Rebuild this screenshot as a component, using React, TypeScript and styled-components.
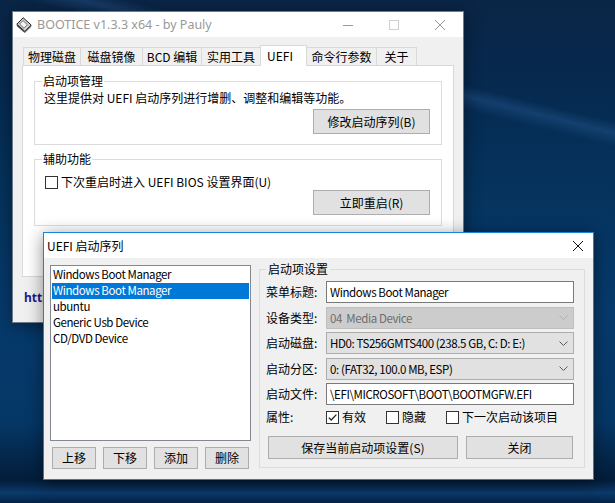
import React from "react";
import styled, { createGlobalStyle } from "styled-components";

const CJK = `"Noto Sans CJK SC", sans-serif`;
const LATIN = `"Noto Sans", "Noto Sans CJK SC", sans-serif`;

const GlobalStyle = createGlobalStyle`
  *, *::before, *::after { box-sizing: border-box; }
  html, body { margin: 0; padding: 0; background: #052a52; }
  body {
    font-family: ${CJK};
    font-size: 12px;
    line-height: 16px;
    color: #000;
  }
`;

const Desktop = styled.main`
  position: relative;
  width: 615px;
  height: 503px;
  overflow: hidden;
  background:
    linear-gradient(194deg, transparent 18.6%, rgba(60, 120, 190, 0.25) 20.3%, transparent 22.4%),
    linear-gradient(180deg, #0a2546 0%, #062a50 18%, #05345f 40%, #063a6c 62%, #053766 84%, #031d3a 95.5%, #0b3a6b 98%, #042242 100%);
`;

const Window = styled.section<{ $x: number; $y: number; $w: number; $h: number; $active?: boolean }>`
  position: absolute;
  left: ${(p) => p.$x}px;
  top: ${(p) => p.$y}px;
  width: ${(p) => p.$w}px;
  height: ${(p) => p.$h}px;
  display: flex;
  flex-direction: column;
  background: #f0f0f0;
  border: 1px solid ${(p) => (p.$active ? "#1883d7" : "#6b7b8c")};
  box-shadow: 0 3px 16px rgba(0, 0, 0, 0.45);
`;

const TitleBar = styled.header<{ $active?: boolean }>`
  flex: none;
  height: 25px;
  display: flex;
  align-items: center;
  background: #fff;
  color: ${(p) => (p.$active ? "#000" : "#999")};
`;

const AppIcon = styled.svg`
  flex: none;
  margin: 0 5px 0 3px;
`;

const TitleText = styled.span<{ $latin?: boolean }>`
  flex: 1;
  padding-left: ${(p) => (p.$latin ? 0 : 3)}px;
  font-family: ${(p) => (p.$latin ? LATIN : CJK)};
  font-size: ${(p) => (p.$latin ? 12.5 : 12)}px;
  white-space: nowrap;
`;

const CaptionButton = styled.div<{ $w?: number }>`
  flex: none;
  width: ${(p) => p.$w ?? 46}px;
  height: 100%;
  display: flex;
  align-items: center;
  justify-content: center;
`;

const MainBody = styled.div`
  flex: 1;
  display: flex;
  flex-direction: column;
  padding: 8px 9px 0;
`;

const TabStrip = styled.div`
  position: relative;
  z-index: 1;
  display: flex;
  align-items: flex-end;
  height: 20px;
  padding-left: 1px;
`;

const Tab = styled.div<{ $w: number; $selected?: boolean }>`
  position: relative;
  z-index: ${(p) => (p.$selected ? 1 : 0)};
  flex: none;
  width: ${(p) => p.$w}px;
  height: ${(p) => (p.$selected ? 21 : 18)}px;
  margin-bottom: ${(p) => (p.$selected ? -1 : 0)}px;
  padding-right: ${(p) => (p.$selected ? 7 : 0)}px;
  display: flex;
  align-items: center;
  justify-content: center;
  border: 1px solid #d9d9d9;
  border-bottom: none;
  background: ${(p) => (p.$selected ? "#fff" : "#f0f0f0")};
  white-space: nowrap;
  & + & {
    margin-left: -1px;
  }
`;

const TabPanel = styled.div`
  flex: none;
  height: 212px;
  display: flex;
  flex-direction: column;
  gap: 6px;
  padding: 7px 11px 0;
  background: #fff;
  border: 1px solid #d9d9d9;
`;

const GroupBox = styled.fieldset<{ $w?: number; $pl: number; $pr: number; $pb: number }>`
  flex: none;
  margin: 0;
  min-width: 0;
  width: ${(p) => (p.$w ? `${p.$w}px` : "auto")};
  border: 1px solid #dcdcdc;
  padding: 0 ${(p) => p.$pr}px ${(p) => p.$pb}px ${(p) => p.$pl}px;
`;

const GroupLegend = styled.legend<{ $shift: number }>`
  padding: 0 ${(p) => (p.$shift < 0 ? 1 : 2)}px;
  margin-left: ${(p) => p.$shift}px;
  line-height: 16px;
`;

const GroupContent = styled.div`
  display: flex;
  flex-direction: column;
`;

const Para = styled.p`
  margin: 1px 0 0;
  white-space: nowrap;
`;

const EndRow = styled.div<{ $mt: number }>`
  display: flex;
  justify-content: flex-end;
  margin-top: ${(p) => p.$mt}px;
`;

const PushButton = styled.button<{ $w: number; $h: number }>`
  flex: none;
  width: ${(p) => p.$w}px;
  height: ${(p) => p.$h}px;
  padding: 0;
  margin: 0;
  font: inherit;
  line-height: 16px;
  color: #000;
  background: #e1e1e1;
  border: 1px solid #adadad;
  white-space: nowrap;
`;

const CheckRow = styled.label<{ $mt?: number; $ml?: number }>`
  display: flex;
  align-items: center;
  gap: 3px;
  height: 16px;
  margin-top: ${(p) => p.$mt ?? 0}px;
  margin-left: ${(p) => p.$ml ?? 0}px;
  white-space: nowrap;
`;

const Box = styled.span`
  flex: none;
  width: 13px;
  height: 13px;
  display: flex;
  align-items: center;
  justify-content: center;
  background: #fff;
  border: 1px solid #333;
`;

const HomeLink = styled.a`
  align-self: flex-start;
  white-space: nowrap;
  margin: 13px 0 0 2px;
  font-family: ${LATIN};
  font-weight: 700;
  color: #1c1c8c;
  text-decoration: none;
  line-height: 16px;
`;

/* dialog */

const DialogBody = styled.div`
  flex: 1;
  display: flex;
  align-items: flex-start;
  gap: 8px;
  padding: 3px 8px 0 6px;
`;

const LeftColumn = styled.div`
  flex: none;
  width: 201px;
  margin-top: 4px;
  display: flex;
  flex-direction: column;
  gap: 6px;
`;

const ListBox = styled.ul`
  height: 176px;
  margin: 0;
  padding: 1px;
  list-style: none;
  background: #fff;
  border: 1px solid #828790;
`;

const ListItem = styled.li<{ $selected?: boolean }>`
  height: 16px;
  line-height: 15px;
  padding-left: 1px;
  font-size: 11.5px;
  letter-spacing: -0.4px;
  white-space: nowrap;
  background: ${(p) => (p.$selected ? "#0078d7" : "transparent")};
  color: ${(p) => (p.$selected ? "#fff" : "#000")};
`;

const ListButtons = styled.div`
  display: flex;
  justify-content: space-between;
  padding: 0 2px;
`;

const FieldGrid = styled.div`
  display: grid;
  grid-template-columns: 60px 248px;
  grid-auto-rows: 22px;
  row-gap: 3.5px;
  align-items: center;
  margin-top: 4px;
`;

const FieldLabel = styled.span`
  white-space: nowrap;
`;

const TextField = styled.input`
  width: 100%;
  height: 100%;
  margin: 0;
  padding: 0 3px;
  font: inherit;
  font-size: 11.5px;
  letter-spacing: -0.4px;
  line-height: 16px;
  color: #000;
  background: #fff;
  border: 1px solid #7a7a7a;
  outline: none;
`;

const Combo = styled.div<{ $disabled?: boolean }>`
  height: 100%;
  display: flex;
  align-items: center;
  justify-content: space-between;
  padding: 0 5px 0 3px;
  font-size: 11.5px;
  letter-spacing: -0.4px;
  white-space: pre;
  background: ${(p) => (p.$disabled ? "#cccccc" : "#e1e1e1")};
  border: 1px solid ${(p) => (p.$disabled ? "#bfbfbf" : "#adadad")};
  color: ${(p) => (p.$disabled ? "#6d6d6d" : "#000")};
`;

const AttrRow = styled.div`
  display: flex;
  align-items: center;
  height: 16px;
  margin-top: 4px;
`;

const AttrLabel = styled.span`
  flex: none;
  width: 60px;
`;

const AttrChecks = styled.div`
  display: flex;
  gap: 20px;
`;

const DialogButtons = styled.div`
  display: flex;
  gap: 8px;
  margin-top: 11px;
  padding-left: 2px;
`;

function Check({ checked }: { checked?: boolean }) {
  return (
    <Box>
      {checked && (
        <svg width="11" height="11" viewBox="0 0 11 11">
          <path d="M1.8 5.6 L4.2 8 L9.4 2.6" fill="none" stroke="#222" strokeWidth="1.3" />
        </svg>
      )}
    </Box>
  );
}

function Chevron({ color }: { color: string }) {
  return (
    <svg width="9" height="5" viewBox="0 0 9 5">
      <path d="M0.5 0.5 L4.5 4.5 L8.5 0.5" fill="none" stroke={color} strokeWidth="1" />
    </svg>
  );
}

const tabs = [
  { label: "物理磁盘", w: 58 },
  { label: "磁盘镜像", w: 63 },
  { label: "BCD 编辑", w: 60 },
  { label: "实用工具", w: 60 },
  { label: "UEFI", w: 47, selected: true },
  { label: "命令行参数", w: 71 },
  { label: "关于", w: 41 },
];

const entries = ["Windows Boot Manager", "Windows Boot Manager", "ubuntu", "Generic Usb Device", "CD/DVD Device"];

type Field = { label: string; kind: "text" | "combo"; value: string; disabled?: boolean };
const fields: Field[] = [
  { label: "菜单标题:", kind: "text", value: "Windows Boot Manager" },
  { label: "设备类型:", kind: "combo", value: "04  Media Device", disabled: true },
  { label: "启动磁盘:", kind: "combo", value: "HD0: TS256GMTS400 (238.5 GB, C: D: E:)" },
  { label: "启动分区:", kind: "combo", value: "0: (FAT32, 100.0 MB, ESP)" },
  { label: "启动文件:", kind: "text", value: "\\EFI\\MICROSOFT\\BOOT\\BOOTMGFW.EFI" },
];

export default function App() {
  return (
    <>
      <GlobalStyle />
      <Desktop>
        <Window $x={12} $y={11} $w={452} $h={312}>
          <TitleBar>
            <AppIcon width="16" height="16" viewBox="0 0 16 16">
              <path d="M0.8 7.2 L7.2 0.8 L15.2 8 L8.8 14.4 Z" fill="#cfcfcf" stroke="#1e1e1e" strokeWidth="1" />
              <path d="M0.8 7.2 L0.8 9 L8.8 16 L8.8 14.4 Z" fill="#3a3a3a" />
              <path d="M8.8 14.4 L8.8 16 L15.2 9.8 L15.2 8 Z" fill="#5a5a5a" />
              <path d="M3.6 7 L7 3.6 L11.4 7.8 L8 11.2 Z" fill="#f4f4f4" stroke="#555" strokeWidth="0.8" />
            </AppIcon>
            <TitleText $latin>BOOTICE v1.3.3 x64 - by Pauly</TitleText>
            <CaptionButton>
              <svg width="10" height="10" viewBox="0 0 10 10">
                <path d="M0 5.5 H10" stroke="#999" strokeWidth="1" />
              </svg>
            </CaptionButton>
            <CaptionButton>
              <svg width="10" height="10" viewBox="0 0 10 10">
                <rect x="0.5" y="0.5" width="9" height="9" fill="none" stroke="#d0d0d0" strokeWidth="1" />
              </svg>
            </CaptionButton>
            <CaptionButton>
              <svg width="10" height="10" viewBox="0 0 10 10">
                <path d="M0 0 L10 10 M10 0 L0 10" stroke="#999" strokeWidth="1" />
              </svg>
            </CaptionButton>
          </TitleBar>
          <MainBody>
            <TabStrip>
              {tabs.map((t) => (
                <Tab key={t.label} $w={t.w} $selected={t.selected}>
                  {t.label}
                </Tab>
              ))}
            </TabStrip>
            <TabPanel>
              <GroupBox $pl={9} $pr={11} $pb={10}>
                <GroupLegend $shift={-2}>启动项管理</GroupLegend>
                <GroupContent>
                  <Para>这里提供对 UEFI 启动序列进行增删、调整和编辑等功能。</Para>
                  <EndRow $mt={3}>
                    <PushButton $w={117} $h={25}>修改启动序列(B)</PushButton>
                  </EndRow>
                </GroupContent>
              </GroupBox>
              <GroupBox $pl={9} $pr={11} $pb={10}>
                <GroupLegend $shift={-2}>辅助功能</GroupLegend>
                <GroupContent>
                  <CheckRow $mt={7} $ml={1}>
                    <Check />
                    下次重启时进入 UEFI BIOS 设置界面(U)
                  </CheckRow>
                  <EndRow $mt={0}>
                    <PushButton $w={117} $h={25}>立即重启(R)</PushButton>
                  </EndRow>
                </GroupContent>
              </GroupBox>
            </TabPanel>
            <HomeLink href="#">http://bbs.wuyou.net</HomeLink>
          </MainBody>
        </Window>

        <Window $x={43} $y={232} $w={551} $h={248} $active>
          <TitleBar $active>
            <TitleText>UEFI 启动序列</TitleText>
            <CaptionButton $w={30}>
              <svg width="10" height="10" viewBox="0 0 10 10">
                <path d="M0 0 L10 10 M10 0 L0 10" stroke="#111" strokeWidth="1" />
              </svg>
            </CaptionButton>
          </TitleBar>
          <DialogBody>
            <LeftColumn>
              <ListBox>
                {entries.map((e, i) => (
                  <ListItem key={i} $selected={i === 1}>
                    {e}
                  </ListItem>
                ))}
              </ListBox>
              <ListButtons>
                <PushButton $w={44} $h={22}>上移</PushButton>
                <PushButton $w={44} $h={22}>下移</PushButton>
                <PushButton $w={44} $h={22}>添加</PushButton>
                <PushButton $w={44} $h={22}>删除</PushButton>
              </ListButtons>
            </LeftColumn>
            <GroupBox $w={326} $pl={6} $pr={10} $pb={8}>
              <GroupLegend $shift={0}>启动项设置</GroupLegend>
              <GroupContent>
                <FieldGrid>
                  {fields.map((f) => (
                    <React.Fragment key={f.label}>
                      <FieldLabel>{f.label}</FieldLabel>
                      {f.kind === "text" ? (
                        <TextField readOnly value={f.value} />
                      ) : (
                        <Combo $disabled={f.disabled}>
                          <span>{f.value}</span>
                          <Chevron color={f.disabled ? "#b0b0b0" : "#5a5a5a"} />
                        </Combo>
                      )}
                    </React.Fragment>
                  ))}
                </FieldGrid>
                <AttrRow>
                  <AttrLabel>属性:</AttrLabel>
                  <AttrChecks>
                    <CheckRow>
                      <Check checked />
                      有效
                    </CheckRow>
                    <CheckRow>
                      <Check />
                      隐藏
                    </CheckRow>
                    <CheckRow>
                      <Check />
                      下一次启动该项目
                    </CheckRow>
                  </AttrChecks>
                </AttrRow>
                <DialogButtons>
                  <PushButton $w={190} $h={23}>保存当前启动项设置(S)</PushButton>
                  <PushButton $w={107} $h={23}>关闭</PushButton>
                </DialogButtons>
              </GroupContent>
            </GroupBox>
          </DialogBody>
        </Window>
      </Desktop>
    </>
  );
}
